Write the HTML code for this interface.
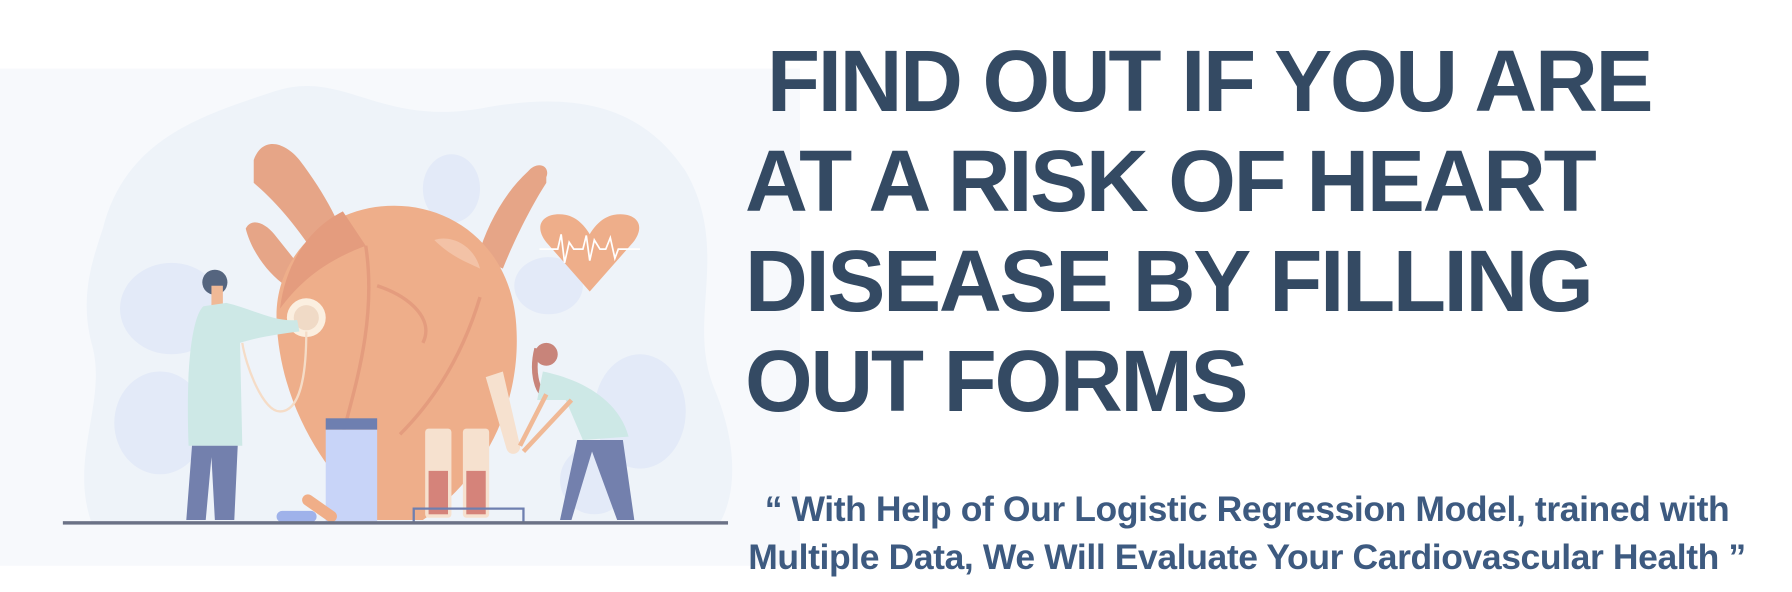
<!DOCTYPE html>
<html><head><meta charset="utf-8"><style>
html,body{margin:0;padding:0;background:#fff;}
body{width:1792px;height:592px;position:relative;overflow:hidden;font-family:"Liberation Sans",Arial,sans-serif;}
svg{position:absolute;left:0;top:0;}
.h{position:absolute;left:745px;top:32px;color:#344a63;font-weight:bold;font-size:87px;line-height:100px;white-space:pre;letter-spacing:-2.3px;}
.s{position:absolute;left:647px;top:485px;width:1200px;text-align:center;color:#3d5a80;font-weight:bold;font-size:35.5px;line-height:48px;letter-spacing:-0.4px;}
</style></head><body>
<svg width="1792" height="592" viewBox="0 0 1792 592">
<g transform="scale(1.1429)">
<rect x="0" y="60" width="700" height="435" fill="#f7f9fc"/>
<path d="M90 200 C110 120 180 100 240 80 C300 60 330 110 420 95 C500 80 560 90 600 150 C640 220 600 280 625 340 C650 400 640 440 630 457 L80 457 C60 400 95 350 80 300 C70 260 80 230 90 200Z" fill="#eef3f9"/>
<g fill="#e3eaf8">
<ellipse cx="150" cy="270" rx="45" ry="40"/><ellipse cx="140" cy="370" rx="40" ry="45"/>
<ellipse cx="560" cy="360" rx="40" ry="50"/><ellipse cx="480" cy="250" rx="30" ry="25"/>
<ellipse cx="395" cy="165" rx="25" ry="30"/><ellipse cx="520" cy="420" rx="30" ry="30"/>
</g>
<path d="M222 140 C230 118 250 125 262 140 C285 170 300 200 305 220 L280 230 C262 200 240 175 222 160Z" fill="#e6a587"/>
<path d="M478 155 C482 145 470 140 462 150 C440 170 425 200 418 225 L440 235 C450 210 465 180 478 160Z" fill="#e6a587"/>
<path d="M215 200 C220 190 232 195 240 205 L260 230 L250 250 C235 240 220 220 215 200Z" fill="#e6a587"/>
<path d="M345 180 C400 180 450 220 452 290 C455 360 420 420 370 455 L330 455 C290 420 245 360 242 280 C240 220 290 180 345 180Z" fill="#eeae8a"/>
<path d="M300 185 C270 200 250 230 245 270 C260 250 280 230 320 215Z" fill="#e49c7e"/>
<path d="M380 210 C395 205 415 215 420 235 C410 230 395 225 380 210Z" fill="#f3c2a6"/>
<path d="M320 215 C330 280 310 340 300 380 M330 250 C360 260 380 280 370 300 M420 260 C405 310 380 350 350 380" stroke="#e49c7e" stroke-width="3" fill="none"/>
<path d="M516 255 L478 212 C465 195 478 185 495 188 C505 190 512 198 516 205 C520 198 527 190 537 188 C554 185 567 195 554 212Z" fill="#eeae8a"/>
<path d="M472 218 L488 218 L491 205 L494 230 L498 212 L502 218 L510 218 L513 206 L516 228 L520 210 L525 218 L530 218 L534 208 L538 226 L541 218 L560 218" stroke="#fff" stroke-width="1.5" fill="none"/>
<circle cx="268" cy="278" r="17" fill="#fbefe0"/><circle cx="268" cy="278" r="11" fill="#f0dac6"/>
<path d="M268 290 C268 330 262 360 245 360 C230 360 215 320 212 300" stroke="#f5dcc7" stroke-width="2" fill="none"/>
<circle cx="188" cy="247" r="11" fill="#55657f"/><rect x="185" y="250" width="10" height="18" fill="#f0b996"/>
<path d="M178 268 C170 275 162 310 165 390 L212 390 L210 300 C225 295 245 292 262 290 L260 280 C240 282 220 270 198 265Z" fill="#cde8e6"/>
<path d="M168 390 L163 455 L180 455 L185 400 L188 455 L205 455 L208 390Z" fill="#7380ad"/>
<rect x="285" y="366" width="45" height="10" fill="#6e7fb0"/><rect x="285" y="376" width="45" height="80" fill="#c8d4f8"/>
<rect x="372" y="375" width="23" height="78" fill="#f6e1cf" rx="3"/><rect x="405" y="375" width="23" height="78" fill="#f6e1cf" rx="3"/>
<rect x="375" y="412" width="17" height="38" fill="#d5837a"/><rect x="408" y="412" width="17" height="38" fill="#d5837a"/>
<path d="M362 458 L362 445 L458 445 L458 458" stroke="#6e7fb0" stroke-width="2" fill="none"/>
<path d="M425 330 L440 325 L455 390 C456 398 445 400 443 392Z" fill="#f6e1cf"/>
<rect x="242" y="447" width="35" height="10" rx="5" fill="#9fb2ea"/>
<rect x="262" y="440" width="35" height="10" rx="5" fill="#f0ae88" transform="rotate(35 280 445)"/>
<circle cx="478" cy="310" r="10" fill="#c8847a"/><path d="M470 305 C465 325 470 340 475 345" stroke="#c8847a" stroke-width="5" fill="none"/>
<path d="M475 325 C500 330 540 345 550 382 L510 385 L495 350 L470 350Z" fill="#cde8e6"/>
<path d="M505 385 L490 455 L500 455 L518 395 L540 455 L555 455 L545 385Z" fill="#7380ad"/>
<path d="M478 345 L455 390 M500 350 L458 395" stroke="#f0b996" stroke-width="4"/>
<rect x="55" y="456" width="582" height="3" fill="#6b7286"/>
</g></svg>
<div class="h"> FIND OUT IF YOU ARE
AT A RISK OF HEART
DISEASE BY FILLING
OUT FORMS</div>
<div class="s">“ With Help of Our Logistic Regression Model, trained with<br>Multiple Data, We Will Evaluate Your Cardiovascular Health ”</div>
</body></html>
